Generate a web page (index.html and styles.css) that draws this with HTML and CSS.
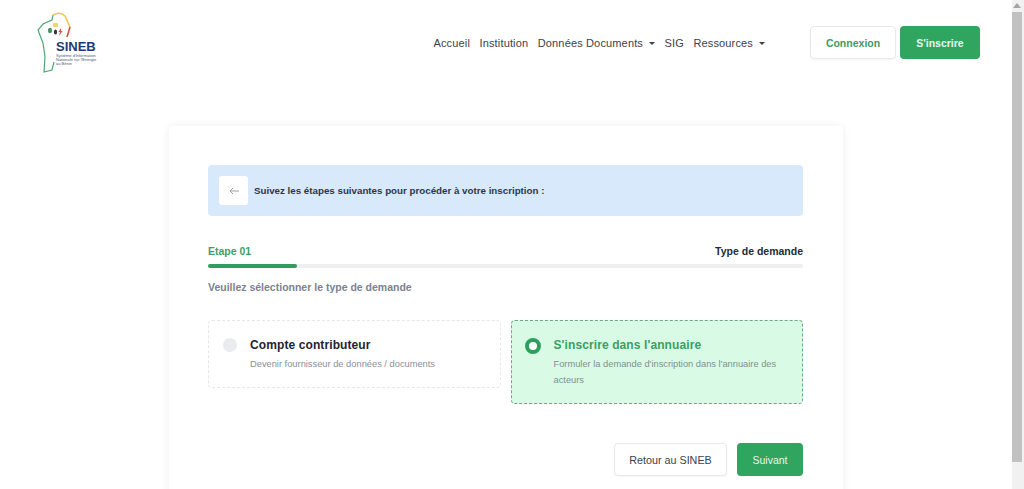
FILE: index.html
```html
<!DOCTYPE html>
<html lang="fr">
<head>
  <meta charset="UTF-8">
  <title>SINEB - Inscription</title>
  <link rel="stylesheet" href="styles.css">
</head>
<body>
  <div class="page">
    <header class="topbar">
      <svg class="logo" viewBox="0 0 62 64" width="62" height="64">
        <path d="M17 4 L16 9 L7 13 L2 19 L5 27 L7 32 L9 46 L8 61 L16 59 L18 51" fill="none" stroke="#4fa873" stroke-width="1.2"/>
        <path d="M17 4 Q24 0 29 5 L34 16" fill="none" stroke="#efc94c" stroke-width="1.6"/>
        <path d="M34 16 L31 26" fill="none" stroke="#d8503f" stroke-width="1.6"/>
        <rect x="17" y="12" width="5" height="4" rx="1" fill="#f3d468"/>
        <ellipse cx="14" cy="19.500" rx="2" ry="2.800" fill="#4c8f63"/>
        <ellipse cx="19.500" cy="21" rx="1.600" ry="2.500" fill="#333"/>
        <path d="M25 17 L22.500 21 L24 21 L23 25 L26.500 20 L25 20 Z" fill="#d8503f"/>
        <text class="logo-name" x="20" y="40">SINEB</text>
        <text class="logo-small" x="20" y="46">Système d'Information</text>
        <text class="logo-small" x="20" y="50">Nationale sur l'Energie</text>
        <text class="logo-small" x="20" y="54">au Bénin</text>
      </svg>
      <nav class="menu">
        <a>Accueil</a>
        <a>Institution</a>
        <a class="caret">Données Documents</a>
        <a>SIG</a>
        <a class="caret">Ressources</a>
      </nav>
      <div class="auth">
        <a class="btn btn-light btn-login">Connexion</a>
        <a class="btn btn-green btn-signup">S'inscrire</a>
      </div>
    </header>

    <main class="card">
      <div class="alert">
        <span class="alert-icon">
          <svg viewBox="0 0 12 8" width="12" height="8"><path d="M11 4H2M5 1L2 4l3 3" fill="none" stroke="#9aa0a8" stroke-width="1"/></svg>
        </span>
        <strong>Suivez les étapes suivantes pour procéder à votre inscription :</strong>
      </div>

      <div class="step-head">
        <span class="step-num">Etape 01</span>
        <span class="step-name">Type de demande</span>
      </div>
      <div class="progress"><div class="progress-bar"></div></div>
      <p class="hint">Veuillez sélectionner le type de demande</p>

      <div class="options">
        <div class="option">
          <span class="radio"></span>
          <div>
            <div class="option-title">Compte contributeur</div>
            <div class="option-text">Devenir fournisseur de données / documents</div>
          </div>
        </div>
        <div class="option active">
          <span class="radio"></span>
          <div>
            <div class="option-title">S'inscrire dans l'annuaire</div>
            <div class="option-text">Formuler la demande d'inscription dans l'annuaire des acteurs</div>
          </div>
        </div>
      </div>

      <div class="actions">
        <a class="btn btn-light btn-back">Retour au SINEB</a>
        <a class="btn btn-green btn-next">Suivant</a>
      </div>
    </main>
  </div>

  <div class="scrollbar">
    <svg class="scroll-arrow" viewBox="0 0 8 5" width="8" height="5"><path d="M4 0L8 5H0z" fill="#a3a3a3"/></svg>
    <div class="scroll-thumb"></div>
  </div>
</body>
</html>
```

FILE: styles.css
```css
html, body {
  height: 100%;
}

body {
  margin: 0;
  display: flex;
  overflow: hidden;
  background: #fff;
  color: #1e2433;
  font-family: "Liberation Sans", Arial, sans-serif;
}

.page {
  flex: 1;
  min-width: 0;
  overflow: hidden;
}

a {
  text-decoration: none;
}

/* header */
.topbar {
  display: flex;
  align-items: flex-start;
  height: 126px;
  box-sizing: border-box;
  padding: 11px 32px 0 36px;
}

.logo {
  flex: none;
}

.logo-name {
  font-size: 13px;
  font-weight: 700;
  fill: #1d3b72;
}

.logo-small {
  font-size: 4px;
  fill: #4a5a78;
}

.menu {
  display: flex;
  align-items: center;
  gap: 9.5px;
  margin: 26px 0 0 auto;
  font-size: 11px;
  letter-spacing: 0.15px;
  color: #3d4148;
}

.caret::after {
  content: "";
  display: inline-block;
  margin-left: 6px;
  vertical-align: 2px;
  border-top: 3px solid #3d4148;
  border-left: 3px solid transparent;
  border-right: 3px solid transparent;
}

.auth {
  display: flex;
  gap: 4px;
  margin: 15px 0 0 45px;
}

.btn {
  display: flex;
  align-items: center;
  justify-content: center;
  box-sizing: border-box;
  height: 33px;
  border-radius: 4px;
  font-size: 10.5px;
}

.btn-light {
  background: #fff;
  border: 1px solid #e6e8ea;
  box-shadow: 0 1px 2px rgba(0, 0, 0, 0.04);
}

.btn-green {
  background: #2fa55f;
  color: #e8f7ee;
}

.btn-login {
  width: 86px;
  color: #3f9a63;
  font-weight: 700;
}

.btn-signup {
  width: 80px;
  font-weight: 700;
}

/* card */
.card {
  width: 674px;
  box-sizing: border-box;
  margin-left: 169px;
  padding: 39px 40px 40px 39px;
  border-radius: 4px;
  box-shadow: 0 0 10px rgba(0, 0, 0, 0.07);
}

.alert {
  display: flex;
  align-items: center;
  gap: 6px;
  height: 51px;
  box-sizing: border-box;
  padding-left: 11px;
  border-radius: 4px;
  background: #d8e9fb;
  font-size: 9.75px;
  color: #2d3647;
}

.alert-icon {
  display: flex;
  align-items: center;
  justify-content: center;
  width: 29px;
  height: 29px;
  border-radius: 3px;
  background: #fff;
}

.step-head {
  display: flex;
  justify-content: space-between;
  margin-top: 29px;
  font-size: 10.5px;
  font-weight: 700;
  line-height: 13px;
}

.step-num {
  color: #41a066;
}

.step-name {
  color: #232a3a;
}

.progress {
  height: 4px;
  margin-top: 6px;
  border-radius: 2px;
  background: #efefef;
}

.progress-bar {
  width: 15%;
  height: 100%;
  border-radius: 2px;
  background: #2f9e5d;
}

.hint {
  margin: 13px 0 0;
  font-size: 10.5px;
  font-weight: 700;
  line-height: 13px;
  color: #7c8290;
}

.options {
  display: flex;
  align-items: flex-start;
  gap: 10px;
  margin-top: 26px;
}

.option {
  flex: 1;
  display: flex;
  gap: 13px;
  box-sizing: border-box;
  padding: 16px 14px 15px;
  border: 1px dashed #e6e7ea;
  border-radius: 4px;
}

.radio {
  flex: none;
  width: 14px;
  height: 14px;
  margin-top: 1px;
  border-radius: 50%;
  background: #e9ebef;
}

.option-title {
  font-size: 12px;
  font-weight: 700;
  line-height: 16px;
  letter-spacing: 0.1px;
}

.option-text {
  margin-top: 3px;
  font-size: 9.3px;
  line-height: 16px;
  color: #8a8f9a;
}

.option.active {
  background: #d9fbe6;
  border-color: #6fa888;
}

.option.active .radio {
  box-sizing: border-box;
  width: 16px;
  height: 16px;
  margin: 1px 0 0 -1px;
  border: 4px solid #2f9e5d;
  background: #fff;
}

.option.active .option-title {
  color: #3aa063;
}

.option.active .option-text {
  color: #7f8f92;
}

.actions {
  display: flex;
  justify-content: flex-end;
  gap: 10px;
  margin-top: 39px;
}

.btn-back {
  width: 113px;
  font-size: 10.75px;
  color: #3d4148;
}

.btn-next {
  width: 66px;
}

/* browser scrollbar */
.scrollbar {
  flex: none;
  display: flex;
  flex-direction: column;
  align-items: flex-start;
  width: 12px;
  background: #f1f1f1;
}

.scroll-arrow {
  flex: none;
  margin: 3px 0 4px 1px;
}

.scroll-thumb {
  width: 10px;
  height: 450px;
  background: #c1c1c1;
}
```
